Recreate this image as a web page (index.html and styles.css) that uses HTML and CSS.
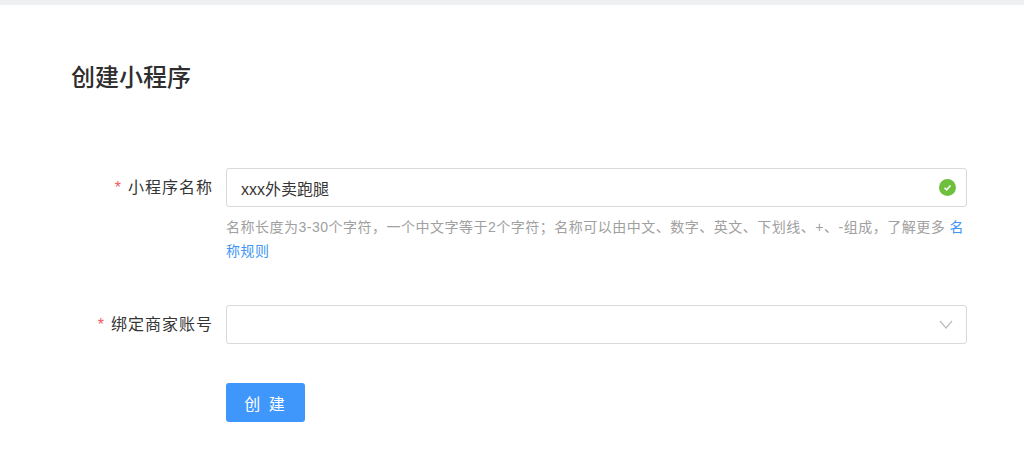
FILE: index.html
```html
<!DOCTYPE html>
<html lang="zh-CN">
<head>
    <meta charset="utf-8">
    <title>创建小程序</title>
    <link rel="stylesheet" href="styles.css">
</head>
<body>
    <div class="topbar"></div>
    <div class="container">
        <h1>创建小程序</h1>

        <div class="row">
            <label class="label"><span class="star">*</span>小程序名称</label>
            <div class="field">
                <div class="input">
                    <span class="value">xxx外卖跑腿</span>
                    <svg class="icon" width="17" height="17" viewBox="0 0 17 17">
                        <circle cx="8.5" cy="8.5" r="8.5" fill="#6fbf3e"/>
                        <path d="M5.5 8.7 L7.6 10.8 L11.5 6.4" fill="none" stroke="#fff" stroke-width="1.5"/>
                    </svg>
                </div>
                <div class="hint">名称长度为3-30个字符，一个中文字等于2个字符；名称可以由中文、数字、英文、下划线、+、-组成，了解更多 <a href="#">名称规则</a></div>
            </div>
        </div>

        <div class="row row-second">
            <label class="label"><span class="star">*</span>绑定商家账号</label>
            <div class="field">
                <div class="input">
                    <span class="value"></span>
                    <svg class="icon arrow" width="14" height="9" viewBox="0 0 14 9">
                        <path d="M1 1 L7 8 L13 1" fill="none" stroke="#bdbdbd" stroke-width="1.2"/>
                    </svg>
                </div>
            </div>
        </div>

        <div class="actions">
            <button class="btn">创 建</button>
        </div>
    </div>
</body>
</html>
```

FILE: styles.css
```css
body { margin: 0; background: white; font-family: "Liberation Sans", "Noto Sans CJK SC", sans-serif; color: #353535; }
.topbar { height: 5px; background: #eff0f2; }
.container { padding: 0 57px 0 71px; }
h1 { margin: 0; padding-top: 56px; font-size: 24px; line-height: 34px; font-weight: 500; color: #2e2e2e; }
.row { display: flex; margin-top: 73px; }
.row-second { margin-top: 42px; }
.label { width: 142px; flex-shrink: 0; line-height: 39px; font-size: 16px; letter-spacing: 1px; text-align: right; }
.star { color: #f05a5a; margin-right: 6px; }
.field { margin-left: 13px; width: 741px; }
.input { display: flex; align-items: center; justify-content: space-between; box-sizing: border-box; height: 39px; padding: 0 10px 0 14px; border: 1px solid #d9d9d9; border-radius: 3px; background: white; }
.value { font-size: 16px; color: #353535; }
.arrow { margin-right: 3px; }
.hint { margin-top: 8px; font-size: 14px; line-height: 24px; letter-spacing: 0.5px; color: #a0a0a0; }
.hint a { color: #3f96f5; text-decoration: none; }
.actions { margin: 39px 0 0 155px; }
.btn { display: block; width: 79px; height: 39px; padding: 0; border: 0; border-radius: 3px; background: #3f96fb; color: white; font-family: inherit; font-size: 16px; letter-spacing: 2px; }
```
